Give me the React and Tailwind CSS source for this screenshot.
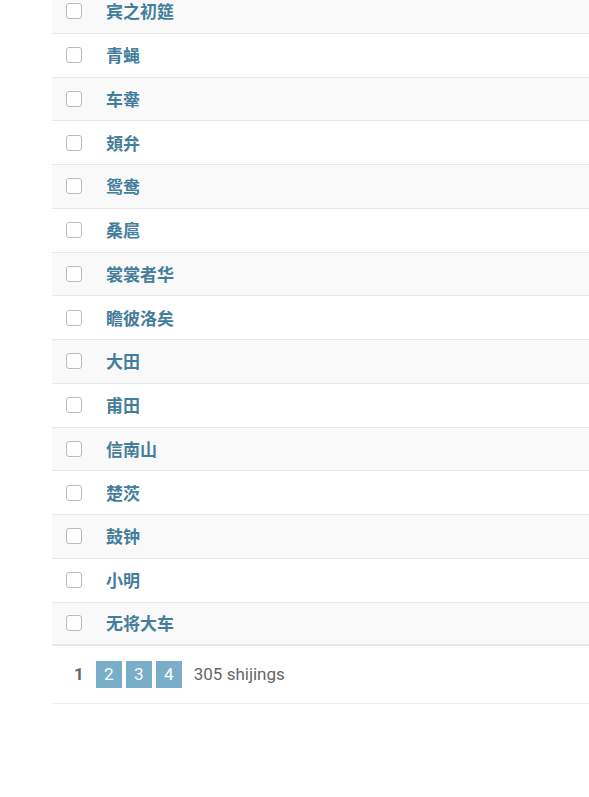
import React from 'react'

const ROWS = [
  '宾之初筵', '青蝇', '车舝', '頍弁', '鸳鸯', '桑扈', '裳裳者华', '瞻彼洛矣',
  '大田', '甫田', '信南山', '楚茨', '鼓钟', '小明', '无将大车',
]

const FONT = { fontFamily: 'Roboto, "Noto Sans CJK SC", sans-serif' }

export default function App(){
  return (
    <div className="min-h-screen bg-white overflow-hidden" style={FONT}>
      <div className="ml-[52px] -mt-[10px]">
        {/* Result rows */}
        {ROWS.map((name, i) => (
          <div key={name}
            className={`h-[43.75px] flex items-center border-b border-[#e8e8e8] ${i % 2 === 0 ? 'bg-[#f9f9f9]' : 'bg-white'} ${i === ROWS.length - 1 ? 'border-b-2' : ''}`}>
            <span className="ml-[14px] w-4 h-4 rounded-[3px] border border-[#bbb] bg-white flex-shrink-0" />
            <a className="ml-[24px] pt-[3px] text-[17px] font-bold text-[#447e9b] leading-none">{name}</a>
          </div>
        ))}

        {/* Pagination */}
        <div className="h-[58px] flex items-center border-b border-[#eee] text-[17px] text-[#666]">
          <span className="ml-[22px] font-bold">1</span>
          <div className="ml-3 flex gap-1">
            {['2', '3', '4'].map(n => (
              <a key={n} className="w-[26px] h-[27px] bg-[#79aec8] text-white flex items-center justify-center">{n}</a>
            ))}
          </div>
          <span className="ml-3">305 shijings</span>
        </div>
      </div>
    </div>
  )
}
